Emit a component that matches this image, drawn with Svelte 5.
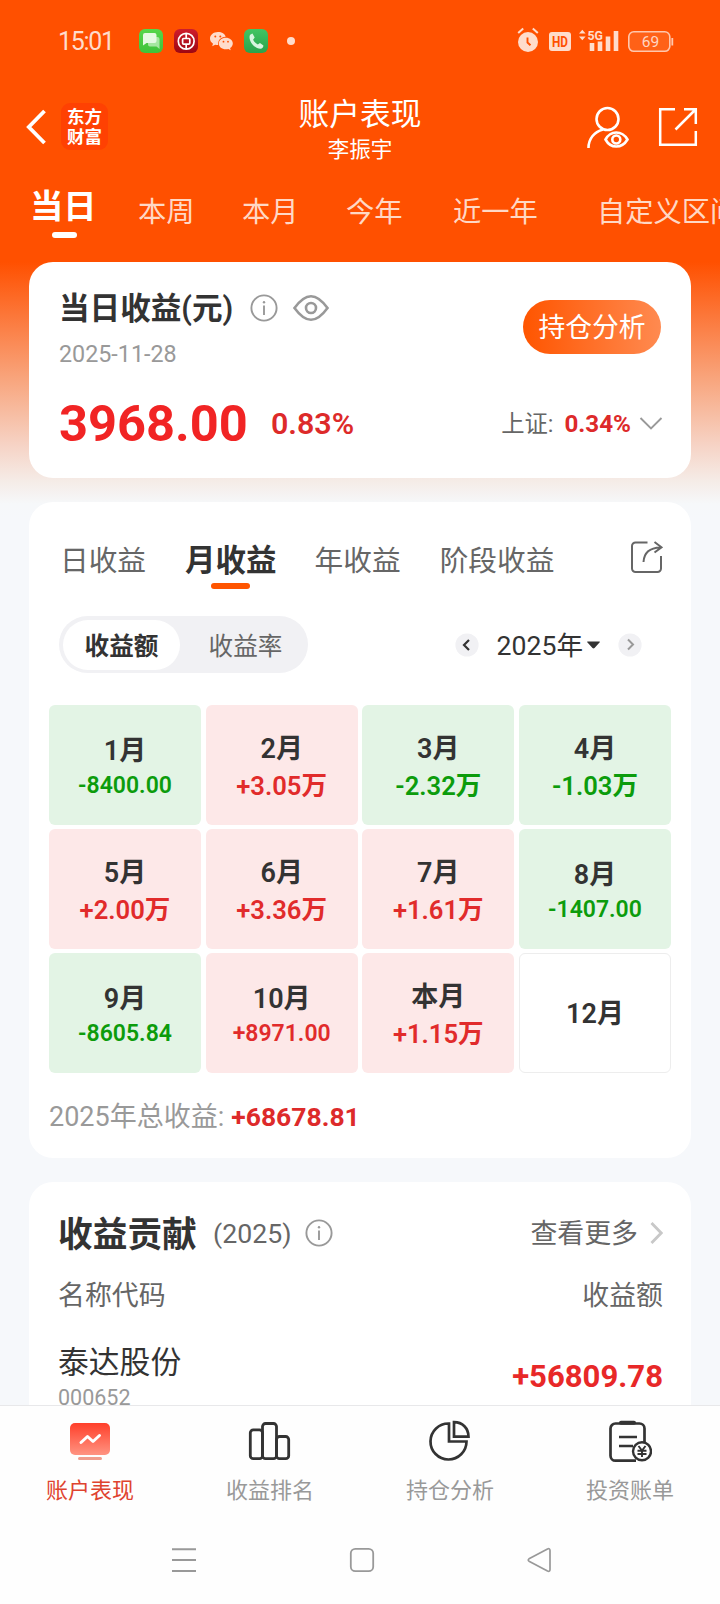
<script>
  const periods = ['当日', '本周', '本月', '今年', '近一年', '自定义区间'];
  const views = ['日收益', '月收益', '年收益', '阶段收益'];
  const months = [
    { name: '1月', value: '-8400.00' },
    { name: '2月', value: '+3.05万' },
    { name: '3月', value: '-2.32万' },
    { name: '4月', value: '-1.03万' },
    { name: '5月', value: '+2.00万' },
    { name: '6月', value: '+3.36万' },
    { name: '7月', value: '+1.61万' },
    { name: '8月', value: '-1407.00' },
    { name: '9月', value: '-8605.84' },
    { name: '10月', value: '+8971.00' },
    { name: '本月', value: '+1.15万' },
    { name: '12月', value: '' }
  ];
  const tone = (v) => (v === '' ? 'empty' : v[0] === '-' ? 'down' : 'up');
</script>

{#snippet info()}
  <svg class="info" width="28" height="28" viewBox="0 0 28 28" fill="none" stroke="#999" stroke-width="1.9">
    <circle cx="14" cy="14" r="12.6" />
    <path d="M14 11.500v9.500" />
    <circle cx="14" cy="8.3" r="1.2" fill="#999" stroke="none" />
  </svg>
{/snippet}

<div class="screen">
  <div class="scroll">
    <div class="status">
      <span class="time">15:01</span>
      <svg class="apps" width="160" height="26" viewBox="0 0 160 26">
        <defs>
          <linearGradient id="g1" x1="0" y1="0" x2="0" y2="1"><stop offset="0" stop-color="#55d64b" /><stop offset="1" stop-color="#3fc23a" /></linearGradient>
          <linearGradient id="g2" x1="0" y1="0" x2="0" y2="1"><stop offset="0" stop-color="#cf1c2c" /><stop offset="1" stop-color="#9d0712" /></linearGradient>
          <linearGradient id="g3" x1="0" y1="0" x2="0" y2="1"><stop offset="0" stop-color="#41c663" /><stop offset="1" stop-color="#2ba24c" /></linearGradient>
        </defs>
        <rect x="0" y="1" width="24" height="24" rx="6" fill="url(#g1)" />
        <path d="M9 9h9.500a2 2 0 0 1 2 2v10l-3-2.500H11a2 2 0 0 1-2-2z" fill="#a5e6a0" />
        <path d="M6 5h9.500a2 2 0 0 1 2 2v6a2 2 0 0 1-2 2H7.500L4 17.500V7a2 2 0 0 1 2-2z" fill="#e5f9e2" />
        <rect x="35" y="1" width="24" height="24" rx="6" fill="url(#g2)" />
        <g fill="none" stroke="#fff" stroke-width="1.700"><circle cx="47.200" cy="13.300" r="7.900" /><rect x="43.600" y="10.500" width="7.200" height="5.600" rx="1" /><path d="M47.200 5.500v5M47.200 16v5" /></g>
        <path d="M79 4c-4.600 0-8 2.900-8 6.600 0 2.100 1.100 3.900 3 5.100l-.8 2.500 3-1.500c1 .3 1.900.4 3 .4-.8-4.600 2.500-8.200 7.500-8.400C86 6 82.900 4 79 4z" fill="#ffdccb" />
        <path d="M86.800 9.700c-4 0-7 2.500-7 5.800s3 5.800 7 5.800c.9 0 1.800-.1 2.600-.4l2.300 1.300-.6-2.100c1.700-1.100 2.700-2.700 2.700-4.600 0-3.300-3-5.800-7-5.800z" fill="#ffdccb" />
        <g fill="#ff5000"><circle cx="76.300" cy="8.600" r="1" /><circle cx="81.300" cy="8.600" r="1" /><circle cx="84.500" cy="13.700" r=".9" /><circle cx="89" cy="13.700" r=".9" /></g>
        <rect x="105" y="1" width="24" height="24" rx="6" fill="url(#g3)" />
        <path d="M111.500 6.500l2-1 2.200 4-1.600 2.200c1 2.200 2.500 3.700 4.700 4.700l2.200-1.500 3.400 2.500c0 1.800-1.200 3.400-3 3.400-5.500-.4-11-6-10.900-11.900 0-1 .3-1.800 1-2.400z" fill="#d8f5df" />
        <circle cx="152" cy="13" r="4" fill="#ffdccb" />
      </svg>
      <svg class="signals" width="160" height="30" viewBox="0 0 160 30">
        <circle cx="11" cy="17" r="10" fill="#ffdccb" />
        <path d="M1.200 8l5-4.500M20.800 8l-5-4.500" stroke="#ffdccb" stroke-width="2" />
        <path d="M10.500 12.500v5l3 2.800" fill="none" stroke="#ff5000" stroke-width="1.900" />
        <rect x="32" y="7" width="22" height="19" rx="3" fill="#ffdccb" />
        <text x="43" y="21.600" text-anchor="middle" font-family="Roboto" font-weight="700" font-size="14" textLength="16" lengthAdjust="spacingAndGlyphs" fill="#ff5000">HD</text>
        <path d="M62 8.500l3.300-3.800 3.300 3.800zM62 11.500l3.300 3.800 3.300-3.800z" fill="#ffdccb" />
        <text x="70.500" y="14.500" font-family="Roboto" font-weight="700" font-size="13.500" textLength="15.500" lengthAdjust="spacingAndGlyphs" fill="#ffdccb">5G</text>
        <path d="M75 18v8M83 16.500V26M91 11.500V26M99 6v20" stroke="#ffdccb" stroke-width="4.600" />
        <rect x="111.800" y="6.800" width="41" height="19.500" rx="5" fill="#ff6117" stroke="#ffc7ad" stroke-width="1.600" />
        <path d="M155.300 13v7.500" stroke="#ffc7ad" stroke-width="1.800" />
        <text x="133.500" y="22" text-anchor="middle" font-family="Roboto" font-size="15.500" fill="#ffd5c2">69</text>
      </svg>
    </div>

    <header>
      <div class="brand">
        <svg width="20" height="36" viewBox="0 0 20 36" fill="none" stroke="#fff" stroke-width="3.800"><path d="M18.500 2L2.800 18l15.700 16" /></svg>
        <div class="logo"><span>东方</span><span>财富</span></div>
      </div>
      <div class="heading">
        <h1>账户表现</h1>
        <p>李振宇</p>
      </div>
      <div class="tools">
        <svg class="person" width="44" height="44" viewBox="0 0 44 44" fill="none" stroke="#fff" stroke-width="2.600">
          <circle cx="22.500" cy="13" r="11" />
          <path d="M3.500 42c0-9 5.500-16 14.500-18.500" />
          <path d="M20.500 33.500c2.500-4.500 6.300-7 10.700-7s8.600 2.500 11.300 7c-2.700 4.500-6.900 7-11.300 7s-8.200-2.500-10.700-7z" />
          <circle cx="31.300" cy="33.500" r="4" />
        </svg>
        <svg width="40" height="40" viewBox="0 0 40 40" fill="none" stroke="#fff" stroke-width="2.500">
          <path d="M17 2.200H2.200v35.600h35.600V24M26 2.200h11.800V17M37.500 2.500L17.500 22.500" />
        </svg>
      </div>
    </header>

    <nav class="periods">
      {#each periods as p, i}
        <span class:active={i === 0}>{p}</span>
      {/each}
    </nav>

    <section class="card today">
      <div class="main">
        <div class="title-row">
          <h2>当日收益(元)</h2>
          {@render info()}
          <svg class="eye" width="36" height="28" viewBox="0 0 36 28" fill="none" stroke="#999" stroke-width="2.600">
            <path d="M1.500 14C8 5 12.500 2.200 18 2.200S28 5 34.500 14C28 23 23.500 25.800 18 25.800S8 23 1.500 14z" />
            <circle cx="18" cy="14" r="5" />
          </svg>
        </div>
        <div class="date">2025-11-28</div>
        <div class="figures"><b>3968.00</b><strong>0.83%</strong></div>
      </div>
      <div class="side">
        <span class="pill">持仓分析</span>
        <div class="index">
          <span>上证:</span><b>0.34%</b>
          <svg width="24" height="14" viewBox="0 0 24 14" fill="none" stroke="#999" stroke-width="1.900"><path d="M1.500 1L12 11.500 22.500 1" /></svg>
        </div>
      </div>
    </section>

    <section class="card profit">
      <div class="views">
        {#each views as v, i}
          <span class:active={i === 1}>{v}</span>
        {/each}
        <svg width="32" height="32" viewBox="0 0 32 32" fill="none" stroke="#666" stroke-width="2">
          <path d="M16.500 1.500H4.500a3.500 3.500 0 0 0-3.500 3.500v22.500A3.500 3.500 0 0 0 4.500 31h22a3.500 3.500 0 0 0 3.500-3.500V15" />
          <path d="M12.500 21C13 12 18 6.800 29.500 6.500M23.500 1l7 5.300-7 5.200" />
        </svg>
      </div>
      <div class="controls">
        <div class="segment"><span class="on">收益额</span><span>收益率</span></div>
        <div class="year">
          <svg width="24" height="24" viewBox="0 0 24 24" fill="none"><circle cx="12" cy="12" r="11.600" fill="#f1f1f4" /><path d="M14 7l-5 5 5 5" stroke="#333" stroke-width="2.200" /></svg>
          <span>2025年</span>
          <svg class="caret" width="13" height="8" viewBox="0 0 13 8"><path d="M.5.500h12q.8.300 0 1L7.500 7q-1 .8-2 0L.5 1.500q-.8-.7 0-1z" fill="#333" /></svg>
          <svg width="24" height="24" viewBox="0 0 24 24" fill="none"><circle cx="12" cy="12" r="11.600" fill="#f1f1f4" /><path d="M10 6.500l5 5-5 5" stroke="#999" stroke-width="2" /></svg>
        </div>
      </div>
      <div class="months">
        {#each months as m}
          <div class="cell {tone(m.value)}">
            <span class="name">{m.name}</span>
            {#if m.value}<span class="value" class:long={!m.value.endsWith('万')}>{m.value}</span>{/if}
          </div>
        {/each}
      </div>
      <div class="total">2025年总收益:<b>+68678.81</b></div>
    </section>

    <section class="card contribution">
      <div class="top">
        <h2>收益贡献</h2>
        <span class="in-year">(2025)</span>
        {@render info()}
        <span class="more">查看更多</span>
        <svg width="13" height="24" viewBox="0 0 13 24" fill="none" stroke="#c8c8c8" stroke-width="2.800"><path d="M1.500 2L11.200 12l-9.700 10" /></svg>
      </div>
      <div class="columns"><span>名称代码</span><span>收益额</span></div>
      <div class="stock">
        <div><div class="stock-name">泰达股份</div><div class="code">000652</div></div>
        <b>+56809.78</b>
      </div>
    </section>
  </div>

  <footer>
    <div class="item current">
      <svg width="44" height="44" viewBox="0 0 44 44">
        <defs><linearGradient id="g4" x1="0" y1="0" x2="0" y2="1"><stop offset="0" stop-color="#ff3f2a" /><stop offset="1" stop-color="#ff9482" /></linearGradient></defs>
        <rect x="2" y="3" width="40" height="32" rx="5" fill="url(#g4)" />
        <path d="M13 22.500l6.500-6 5.500 5 6.500-6" fill="none" stroke="#fff" stroke-width="3" stroke-linecap="round" stroke-linejoin="round" />
        <rect x="10" y="37" width="24" height="3" rx="1.500" fill="#f09d8d" />
      </svg>
      <span>账户表现</span>
    </div>
    <div class="item">
      <svg width="44" height="44" viewBox="0 0 44 44" fill="none" stroke="#333" stroke-width="2.800">
        <rect x="2.300" y="9.800" width="12.200" height="28.900" rx="3" /><rect x="14.500" y="3.500" width="14" height="35.200" rx="3" /><rect x="28.500" y="16.500" width="12.200" height="22.200" rx="3" />
      </svg>
      <span>收益排名</span>
    </div>
    <div class="item">
      <svg width="44" height="44" viewBox="0 0 44 44" fill="none" stroke="#333" stroke-width="2.700">
        <path d="M21 3.500A18 18 0 1 0 38.500 21.500H21z" />
        <path d="M26 2.200c8.500 0 14.500 6 14.500 14.500H26z" />
      </svg>
      <span>持仓分析</span>
    </div>
    <div class="item">
      <svg width="44" height="44" viewBox="0 0 44 44" fill="none" stroke="#333" stroke-width="2.700">
        <path d="M28 40.700H7.500a5 5 0 0 1-5-5V8.500a5 5 0 0 1 5-5h24a5 5 0 0 1 5 5V22" />
        <path d="M13 2.800h13" stroke-width="4" stroke-linecap="round" /><path d="M11 17h18M11 26h14" />
        <circle cx="34" cy="31.300" r="9" fill="#fff" stroke-width="2.400" />
        <path d="M30.500 26l3.500 4.500 3.500-4.500M34 30.500v6.500M29.500 30.800h9M29.500 34h9" stroke-width="1.900" />
      </svg>
      <span>投资账单</span>
    </div>
  </footer>

  <div class="system">
    <svg width="26" height="26" viewBox="0 0 26 26" stroke="#999" stroke-width="2"><path d="M1 2.200h24M1 13h24M1 24h24" /></svg>
    <svg width="26" height="26" viewBox="0 0 26 26" fill="none" stroke="#999" stroke-width="1.800"><rect x="1.800" y="1.800" width="22.400" height="22.400" rx="4.500" /></svg>
    <svg width="26" height="26" viewBox="0 0 26 26" fill="none" stroke="#999" stroke-width="1.700" stroke-linejoin="round"><path d="M2 11.800L20.500 2q2.500-1 2.500 1.500v19q0 2.500-2.500 1.500L2 14.200q-1.500-1.200 0-2.400z" /></svg>
  </div>
</div>

<style>
  :global(body) { margin: 0; background: #fff; }
  .screen { width: 720px; height: 1604px; overflow: hidden; display: flex; flex-direction: column; background: #fefefe; color: #333; font-family: Roboto, 'Noto Sans CJK SC', sans-serif; white-space: nowrap; }
  .screen :global(svg) { display: block; flex: none; }
  h1, h2, p { margin: 0; font-weight: 400; }
  .scroll { height: 1405px; overflow: hidden; background: linear-gradient(#ff5000 262px, #f8a780 382px, #f6d3c5 445px, #f5ebe6 480px, #f6f8fa 504px, #f6f8fb 520px); }

  .status { height: 82px; box-sizing: border-box; padding: 0 43px 0 58px; display: flex; align-items: center; }
  .time { width: 81px; font-size: 25px; line-height: 30px; padding-top: 2px; letter-spacing: -1.3px; color: #ffdccb; }
  .signals { margin-left: auto; margin-top: -2px; }

  header { height: 92px; box-sizing: border-box; padding: 0 22px 0 26px; display: grid; grid-template-columns: 1fr auto 1fr; color: #fff; }
  .brand, .tools { display: flex; align-items: center; margin-bottom: 3px; }
  .brand { gap: 15px; }
  .logo { width: 47px; height: 47px; border-radius: 9px; background: #ff4102; display: flex; flex-direction: column; align-items: center; justify-content: center; font-size: 17.5px; line-height: 20px; font-weight: 700; }
  .heading { text-align: center; padding-top: 12px; margin-left: -4px; }
  h1 { font-size: 30.7px; line-height: 42px; }
  .heading p { font-size: 21.5px; line-height: 28px; }
  .tools { justify-content: flex-end; gap: 29px; }
  .person { margin-top: 2px; }

  .periods { height: 88px; display: flex; padding-left: 30px; color: #ffd8c5; overflow: hidden; font-size: 28.3px; line-height: 78px; }
  .periods span { margin-left: 47.4px; flex: none; }
  .periods span:nth-child(2) { margin-left: 42px; }
  .periods span:nth-child(5) { margin-left: 50.4px; }
  .periods span:nth-child(6) { margin-left: 59px; }
  .periods .active { margin-left: 0; width: 66px; font-size: 33.3px; font-weight: 700; line-height: 66px; color: #fff; }
  .active::after { content: ''; display: block; border-radius: 3px; }
  .periods .active::after { width: 25px; height: 6px; margin: -8px auto 0 22px; background: #fff; }

  .card { width: 662px; margin: 0 auto 24px; box-sizing: border-box; background: #fff; border-radius: 24px; }
  .today { height: 216px; padding: 23px 29px 0 30px; display: flex; justify-content: space-between; }
  .title-row { display: flex; align-items: center; height: 46px; }
  .title-row h2 { font-size: 30.6px; font-weight: 600; line-height: 46px; padding-top: 2px; width: 191px; }
  .title-row .eye { margin-left: 15px; }
  .date { font-size: 23.3px; line-height: 44px; height: 46px; color: #999; margin-top: 1px; }
  .figures { display: flex; align-items: center; height: 68px; margin-top: 12px; }
  .figures b { font-size: 50.6px; line-height: 68px; color: #f12424; width: 212px; }
  .figures strong { font-size: 30.4px; font-weight: 600; line-height: 68px; color: #dd2a2a; }
  .side { display: flex; flex-direction: column; align-items: flex-end; }
  .pill { width: 138px; height: 54px; margin: 15px 1px 0 0; border-radius: 27px; background: linear-gradient(90deg, #ff5500, #ff8a50); color: #fff; font-size: 26.8px; line-height: 57px; text-align: center; }
  .index { display: flex; align-items: center; margin: 48px -1px 0 0; line-height: 44px; font-size: 23.3px; color: #666; }
  .index b { margin: 0 8px 0 11px; font-size: 24.2px; color: #dd2a2a; }

  .profit { height: 656px; }
  .views { display: flex; height: 96px; padding: 0 28px 0 31px; line-height: 118px; font-size: 28.7px; color: #666; }
  .views span { margin-right: 39px; }
  .views .active { font-size: 30.5px; font-weight: 700; color: #333; margin-right: 38px; }
  .views .active::after { width: 39px; height: 6px; margin: -37px auto 0; background: #ff5500; }
  .views svg { margin: 39px 0 0 auto; }
  .controls { display: flex; justify-content: space-between; padding: 18px 49px 0 30px; height: 57px; }
  .segment { width: 249px; height: 57px; border-radius: 29px; background: #f1f1f4; display: flex; align-items: center; box-sizing: border-box; padding-left: 4px; font-size: 24.6px; line-height: 54px; color: #666; }
  .segment span { width: 117px; height: 50px; border-radius: 25px; text-align: center; }
  .segment span + span { margin-left: 7px; }
  .segment .on { background: #fff; color: #333; font-weight: 700; }
  .year { display: flex; align-items: center; font-size: 26.6px; line-height: 57px; }
  .year span { margin-left: 18px; padding-top: 2px; }
  .year .caret { margin: 0 18px 0 4px; }
  .months { display: grid; grid-template-columns: repeat(4, 1fr); grid-auto-rows: 120px; gap: 4px 4.6px; margin: 32px 20px 0; }
  .cell { border-radius: 6px; box-sizing: border-box; padding-top: 2px; display: flex; flex-direction: column; align-items: center; justify-content: center; }
  .name { font-size: 27px; line-height: 40px; font-weight: 600; }
  .value { font-size: 25.6px; line-height: 34px; font-weight: 600; }
  .value.long { font-size: 23px; line-height: 30px; }
  .up { background: #fde8e8; }
  .up .value { color: #e12b2b; }
  .down { background: #e3f4e5; }
  .down .value { color: #0c9c0c; }
  .empty { border: 1px solid #ededed; }
  .total { padding: 14px 20px 0; font-size: 27px; line-height: 60px; color: #999; }
  .total b { font-size: 26.5px; color: #dd2a2a; margin-left: 7px; }

  .contribution { height: 300px; padding: 24px 28px 0 29px; }
  .top { display: flex; align-items: center; height: 54px; }
  .top h2 { font-size: 34.7px; line-height: 54px; padding-top: 3px; font-weight: 700; width: 155px; }
  .in-year { font-size: 26.7px; color: #666; width: 92px; line-height: 54px; padding-top: 1px; }
  .info { position: static; }
  .more { margin: 0 12px 0 auto; font-size: 26.9px; color: #666; line-height: 54px; padding-top: 2px; }
  .columns { display: flex; justify-content: space-between; font-size: 26.9px; line-height: 46px; margin-top: 13px; color: #666; }
  .stock { display: flex; justify-content: space-between; margin-top: 21px; }
  .stock-name { font-size: 30.8px; line-height: 46px; }
  .code { font-size: 21.5px; line-height: 24px; color: #999; }
  .stock b { font-size: 31.1px; line-height: 74px; color: #e82828; }

  footer { height: 107px; border-top: 1px solid #e8e8ea; display: grid; grid-template-columns: repeat(4, 1fr); background: #fefefe; }
  .item { display: flex; flex-direction: column; align-items: center; padding-top: 14px; color: #999; font-size: 22px; }
  .item span { line-height: 42px; margin-top: 6px; }
  .current { color: #df432f; }
  .system { flex: 1; display: flex; justify-content: space-between; padding: 34px 167px 0 171px; }
</style>
